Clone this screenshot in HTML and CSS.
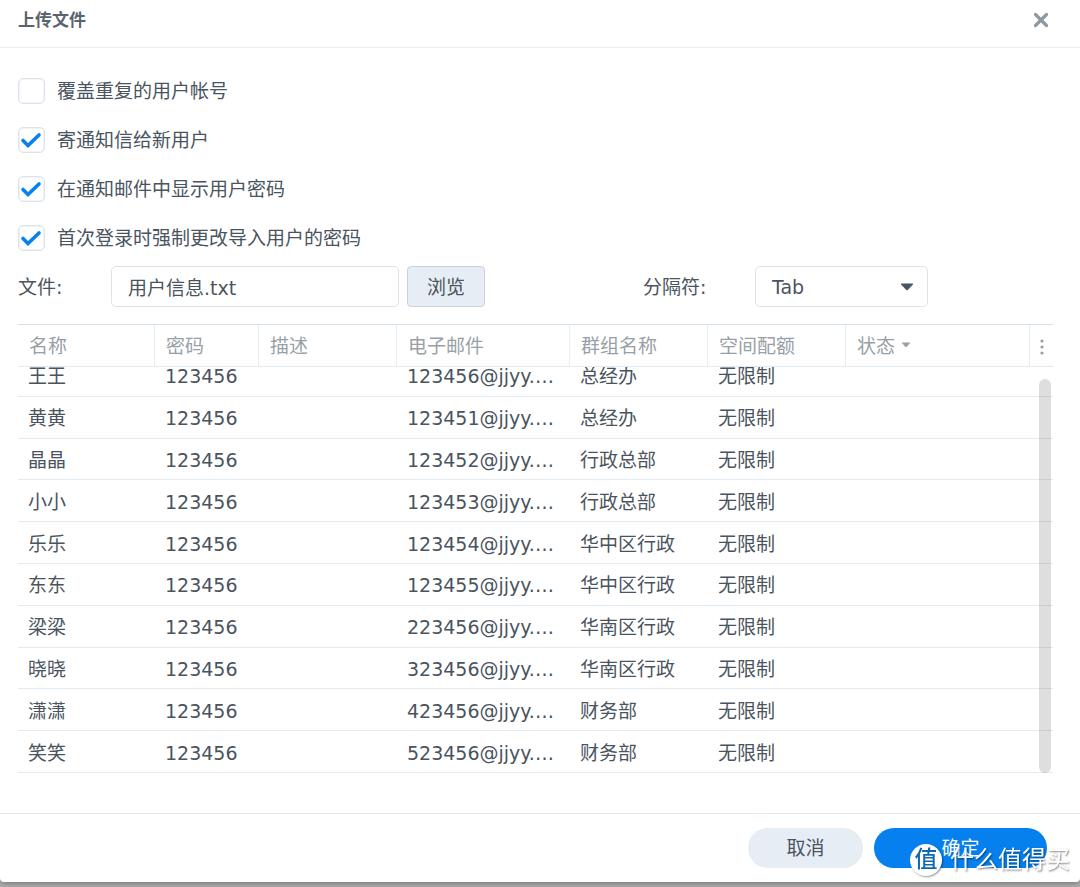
FILE: index.html
```html
<!DOCTYPE html>
<html lang="zh-CN">
<head>
<meta charset="utf-8">
<title>上传文件</title>
<link rel="stylesheet" href="styles.css">
</head>
<body>
<main class="dialog">
  <header class="dialog-header">
    <h1 class="dialog-title">上传文件</h1>
    <button class="close" type="button" aria-label="关闭">
      <svg width="16" height="16" viewBox="0 0 16 16"><path d="M2.5 2.5l11 11M13.5 2.5l-11 11" fill="none" stroke="currentColor" stroke-width="3.2" stroke-linecap="round"/></svg>
    </button>
  </header>

  <form class="content">
    <div class="options">
      <label class="option"><input class="check" type="checkbox"><svg class="tick" viewBox="0 0 26 26"><path d="M5 13.5l5 5L21 8"/></svg><span>覆盖重复的用户帐号</span></label>
      <label class="option"><input class="check" type="checkbox" checked><svg class="tick" viewBox="0 0 26 26"><path d="M5 13.5l5 5L21 8"/></svg><span>寄通知信给新用户</span></label>
      <label class="option"><input class="check" type="checkbox" checked><svg class="tick" viewBox="0 0 26 26"><path d="M5 13.5l5 5L21 8"/></svg><span>在通知邮件中显示用户密码</span></label>
      <label class="option"><input class="check" type="checkbox" checked><svg class="tick" viewBox="0 0 26 26"><path d="M5 13.5l5 5L21 8"/></svg><span>首次登录时强制更改导入用户的密码</span></label>
    </div>

    <div class="file-row">
      <label class="file-label" for="file">文件:</label>
      <input class="field file-field" id="file" type="text" value="用户信息.txt">
      <button class="browse" type="button">浏览</button>
      <label class="sep-label" for="separator">分隔符:</label>
      <div class="select-box">
        <select class="field select" id="separator"><option>Tab</option></select>
        <svg class="caret" width="14" height="8" viewBox="0 0 14 8"><path d="M1.5.5h11q1 .3.4 1L8 6.800q-1 .8-2 0L1.100 1.500Q.5.800 1.500.5z" fill="currentColor"/></svg>
      </div>
    </div>

    <div class="grid">
      <div class="grid-scroll" id="users">
        <table class="users">
          <colgroup><col class="c-name"><col class="c-pass"><col class="c-desc"><col class="c-mail"><col class="c-group"><col class="c-quota"><col><col class="c-menu"></colgroup>
          <thead>
            <tr><th>名称</th><th>密码</th><th>描述</th><th>电子邮件</th><th>群组名称</th><th>空间配额</th>
            <th>状态<svg class="sort" width="10" height="6" viewBox="0 0 10 6"><path d="M.5.5h9L5 5.500z" fill="currentColor"/></svg></th>
            <th class="menu"><svg width="4" height="16" viewBox="0 0 4 16" fill="currentColor"><circle cx="2" cy="2" r="1.600"/><circle cx="2" cy="8" r="1.600"/><circle cx="2" cy="14" r="1.600"/></svg></th></tr>
          </thead>
          <tbody>
            <tr><td>王王</td><td>123456</td><td></td><td>123456@jjyy.…</td><td>总经办</td><td>无限制</td><td></td><td></td></tr>
            <tr><td>黄黄</td><td>123456</td><td></td><td>123451@jjyy.…</td><td>总经办</td><td>无限制</td><td></td><td></td></tr>
            <tr><td>晶晶</td><td>123456</td><td></td><td>123452@jjyy.…</td><td>行政总部</td><td>无限制</td><td></td><td></td></tr>
            <tr><td>小小</td><td>123456</td><td></td><td>123453@jjyy.…</td><td>行政总部</td><td>无限制</td><td></td><td></td></tr>
            <tr><td>乐乐</td><td>123456</td><td></td><td>123454@jjyy.…</td><td>华中区行政</td><td>无限制</td><td></td><td></td></tr>
            <tr><td>东东</td><td>123456</td><td></td><td>123455@jjyy.…</td><td>华中区行政</td><td>无限制</td><td></td><td></td></tr>
            <tr><td>梁梁</td><td>123456</td><td></td><td>223456@jjyy.…</td><td>华南区行政</td><td>无限制</td><td></td><td></td></tr>
            <tr><td>晓晓</td><td>123456</td><td></td><td>323456@jjyy.…</td><td>华南区行政</td><td>无限制</td><td></td><td></td></tr>
            <tr><td>潇潇</td><td>123456</td><td></td><td>423456@jjyy.…</td><td>财务部</td><td>无限制</td><td></td><td></td></tr>
            <tr><td>笑笑</td><td>123456</td><td></td><td>523456@jjyy.…</td><td>财务部</td><td>无限制</td><td></td><td></td></tr>
          </tbody>
        </table>
      </div>
      <div class="scroll-thumb"></div>
    </div>
  </form>

  <footer class="dialog-footer">
    <button class="btn cancel" type="button">取消</button>
    <button class="btn confirm" type="button">确定</button>
  </footer>
</main>
<div class="backdrop"></div>
<div class="watermark"><span class="badge">值</span><span>什么值得买</span></div>
<script src="script.js"></script>
</body>
</html>
```
FILE: styles.css
```css
* { box-sizing: border-box; }

body {
  margin: 0;
  min-height: 100vh;
  display: flex;
  flex-direction: column;
  background: #b2b2b2;
  color: #4a545e;
  font: 400 19px/28px "DejaVu Sans", "Noto Sans CJK SC", sans-serif;
}

button, input, select {
  font: inherit;
  color: inherit;
}

button { cursor: pointer; }

.dialog {
  flex: 1;
  display: flex;
  flex-direction: column;
  background: #fff;
  border-radius: 0 0 4px 4px;
  box-shadow: 0 0 8px rgba(0, 0, 0, 0.5);
}

.dialog-header {
  display: flex;
  align-items: center;
  justify-content: space-between;
  height: 48px;
  padding: 0 31px 8px 18px;
  border-bottom: 1px solid #e6edf3;
}

.dialog-title {
  margin: 0;
  font-size: 17px;
  font-weight: 700;
  line-height: 24px;
  color: #5a646e;
}

.close {
  display: flex;
  padding: 0;
  border: 0;
  background: none;
  color: #8f979f;
}

.content {
  flex: 1;
  display: flex;
  flex-direction: column;
  padding: 29px 27px 40px 18px;
}

.options {
  display: grid;
  gap: 23px;
}

.option {
  display: grid;
  grid-template-columns: 27px 1fr;
  column-gap: 12px;
  align-items: center;
  height: 26px;
}

.check {
  grid-area: 1 / 1;
  appearance: none;
  width: 27px;
  height: 26px;
  margin: 0;
  border: 1px solid #dbe4ec;
  border-radius: 5px;
  box-shadow: inset 0 0 0 1px #f0f4f8;
}

.tick {
  grid-area: 1 / 1;
  width: 26px;
  height: 26px;
  visibility: hidden;
  pointer-events: none;
  fill: none;
  stroke: #0681ee;
  stroke-width: 3.6;
  stroke-linecap: round;
  stroke-linejoin: miter;
}

.check:checked + .tick { visibility: visible; }

.file-row {
  display: flex;
  align-items: center;
  height: 41px;
  margin: 16px 0 17px;
}

.file-label { width: 93px; }

.field {
  height: 41px;
  padding: 0 16px;
  border: 1px solid #dbe4ec;
  border-radius: 5px;
  background: #fff;
}

.file-field { width: 288px; }

.browse {
  width: 78px;
  height: 41px;
  margin-left: 8px;
  padding: 0;
  border: 1px solid #cbd3da;
  border-radius: 4px;
  background: #e7edf4;
}

.sep-label {
  width: 112px;
  margin-left: 158px;
}

.select-box {
  position: relative;
  width: 173px;
}

.select {
  display: block;
  width: 100%;
  appearance: none;
}

.caret {
  position: absolute;
  right: 14px;
  top: 17px;
  color: #4a545e;
  pointer-events: none;
}

.grid {
  position: relative;
  flex: 1 1 0;
  min-height: 0;
}

.grid-scroll {
  position: absolute;
  inset: 0;
  overflow: hidden;
  border-top: 1px solid #d3dfea;
}

.users {
  width: 100%;
  height: 460px;
  table-layout: fixed;
  border-collapse: separate;
  border-spacing: 0;
}

.c-name { width: 137px; }
.c-pass { width: 104px; }
.c-desc, .c-group, .c-quota { width: 138px; }
.c-mail { width: 173px; }
.c-menu { width: 23px; }

.users th {
  position: sticky;
  top: 0;
  height: 42px;
  padding: 0 11px;
  border-right: 1px solid #e6edf3;
  border-bottom: 1px solid #e3ebf2;
  background: #fff;
  color: #989fa6;
  font-weight: 400;
  text-align: left;
  white-space: nowrap;
}

.users .menu {
  padding: 0;
  border-right: 0;
  text-align: center;
}

.menu svg { vertical-align: middle; }

.sort {
  margin-left: 6px;
  vertical-align: 5px;
}

.users td {
  padding: 2px 10px 0;
  border-bottom: 1px solid #e3ebf2;
  white-space: nowrap;
}

.scroll-thumb {
  position: absolute;
  top: 55px;
  right: 2px;
  bottom: 0;
  width: 12px;
  border-radius: 6px;
  background: rgba(0, 0, 0, 0.13);
}

.dialog-footer {
  display: flex;
  justify-content: flex-end;
  gap: 11px;
  padding: 14px 33px;
  border-top: 1px solid #e0e8ef;
}

.btn {
  height: 40px;
  padding: 0;
  border: 0;
  border-radius: 20px;
}

.cancel {
  width: 115px;
  background: #e7edf4;
}

.confirm {
  width: 173px;
  background: #0580ee;
  color: #fff;
}

.backdrop { height: 5px; }

.watermark {
  position: fixed;
  right: 10px;
  bottom: 11px;
  display: flex;
  align-items: center;
  gap: 8px;
  color: #fff;
  font-size: 24px;
  font-weight: 400;
  line-height: 32px;
  text-shadow: 1px 1px 2px rgba(0, 0, 0, 0.5);
  pointer-events: none;
}

.badge {
  width: 32px;
  height: 32px;
  border-radius: 50%;
  background: #fff;
  box-shadow: 1px 1px 2px rgba(0, 0, 0, 0.4);
  color: #1268b0;
  font-size: 23px;
  font-weight: 500;
  line-height: 31px;
  text-align: center;
  text-shadow: none;
}
```
FILE: script.js
```js
const users = document.getElementById("users");
users.scrollTop = users.scrollHeight;
```
